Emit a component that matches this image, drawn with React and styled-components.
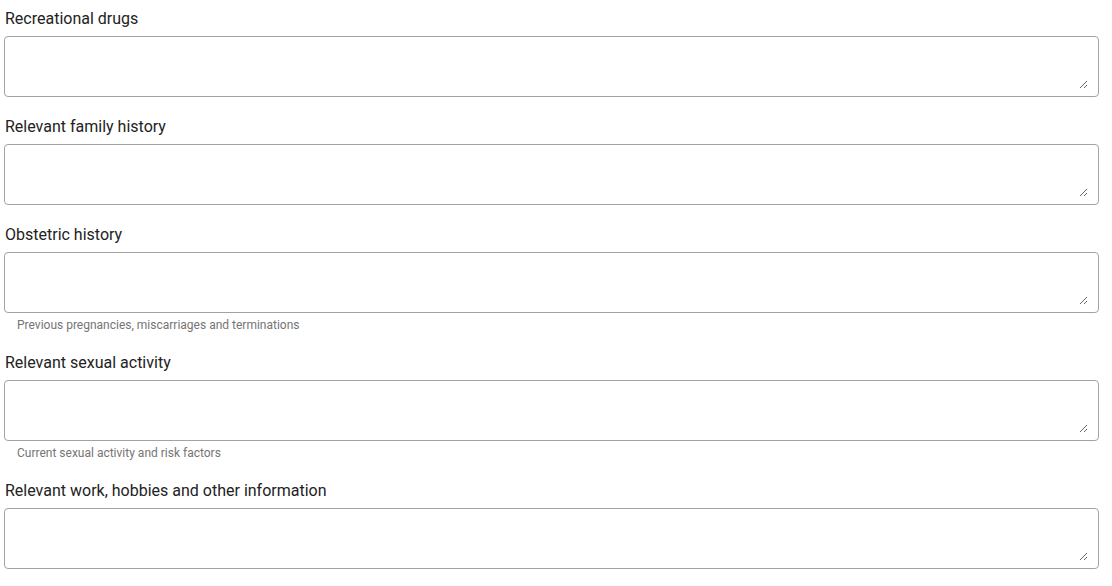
import React from 'react'
import styled, { createGlobalStyle } from 'styled-components'

const GlobalStyle = createGlobalStyle`
body{
    margin: 0;
    background: #fff;
    font-family: Roboto, 'Liberation Sans', sans-serif;
}
`

const fields = [
    { id: 'drugs', label: 'Recreational drugs' },
    { id: 'family', label: 'Relevant family history' },
    { id: 'obstetric', label: 'Obstetric history', hint: 'Previous pregnancies, miscarriages and terminations' },
    { id: 'sexual', label: 'Relevant sexual activity', hint: 'Current sexual activity and risk factors' },
    { id: 'work', label: 'Relevant work, hobbies and other information' },
]

const App = ()=>{
return(
    <>
    <GlobalStyle/>
    <Form>
        {fields.map((field)=>(
            <Field key={field.id}>
                <Label htmlFor={field.id}>{field.label}</Label>
                <InputBox>
                    <TextArea id={field.id}/>
                </InputBox>
                {field.hint && <Hint>{field.hint}</Hint>}
            </Field>
        ))}
    </Form>
    </>
)}

const Form = styled.form`
padding: 8px 13px 0 4px;
display: flex;
flex-direction: column;
gap: 19px;
`
const Field = styled.div`
display: flex;
flex-direction: column;
`
const Label = styled.label`
display: block;
font-size: 16px;
line-height: 22px;
height: 22px;
color: #222;
margin-bottom: 6px;
padding-left: 1px;
`
const InputBox = styled.div`
box-sizing: border-box;
height: 61px;
flex: none;
border: 1px solid #a3a3a3;
border-radius: 4px;
padding: 8px 10px 7px 10px;
display: flex;
`
const TextArea = styled.textarea`
flex: 1;
margin: 0;
padding: 0;
border: none;
resize: vertical;
font-family: Roboto, 'Liberation Sans', sans-serif;
font-size: 14px;
outline: none;
background: transparent;
`
const Hint = styled.div`
font-size: 12px;
line-height: 16px;
height: 16px;
color: #757575;
padding: 4px 0 0 13px;
`

export default App
